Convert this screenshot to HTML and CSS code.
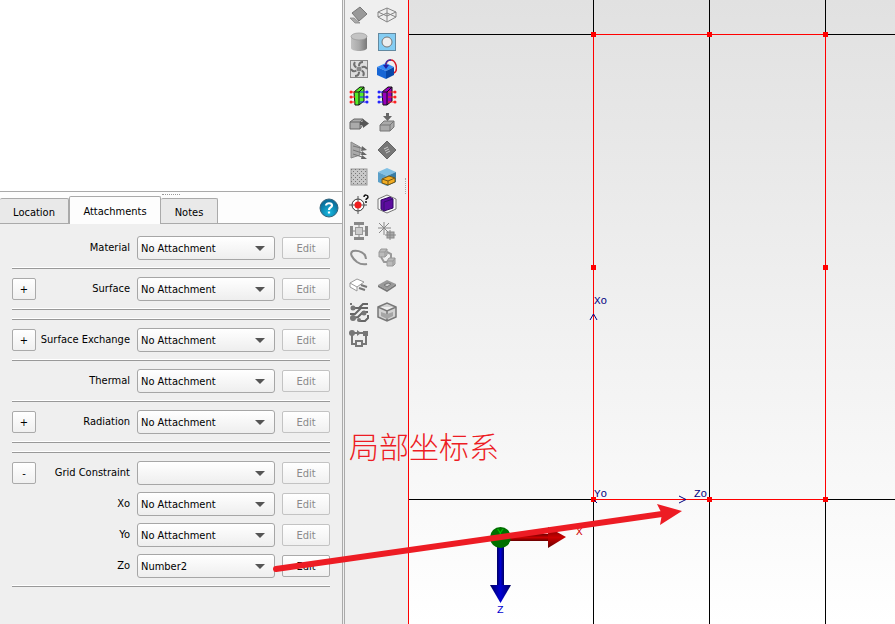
FILE: index.html
```
<!DOCTYPE html>
<html lang="zh">
<head>
<meta charset="utf-8">
<title>Attachments</title>
<link rel="stylesheet" href="styles.css">
</head>
<body>
<div class="app">
  <aside class="panel">
    <div class="tree"></div>
    <div class="grip"></div>
    <nav class="tabs">
      <button class="tab">Location</button>
      <button class="tab active">Attachments</button>
      <button class="tab">Notes</button>
      <button class="help" aria-label="Help"><svg width="20" height="20" viewBox="0 0 20 20"><defs><radialGradient id="hg" cx="50%" cy="75%" r="60%"><stop offset="0" stop-color="#16b9e0"/><stop offset="1" stop-color="#0b6f9c"/></radialGradient></defs><circle cx="10" cy="10" r="9" fill="url(#hg)" stroke="#35637a" stroke-width="1"/><path d="M7 7.500C7 4.500 13 4.500 13 7.500C13 9.500 10 9.500 10 12M10 13.500V15.500" fill="none" stroke="#fff" stroke-width="2.200"/></svg></button>
    </nav>
    <form class="form">
      <div class="row"><label for="material">Material</label><select id="material"><option>No Attachment</option></select><button type="button" class="edit" disabled>Edit</button></div>
      <hr>
      <div class="row"><button type="button" class="expand">+</button><label for="surface">Surface</label><select id="surface"><option>No Attachment</option></select><button type="button" class="edit" disabled>Edit</button></div>
      <hr class="end"><hr>
      <div class="row"><button type="button" class="expand">+</button><label for="exchange">Surface Exchange</label><select id="exchange"><option>No Attachment</option></select><button type="button" class="edit" disabled>Edit</button></div>
      <hr>
      <div class="row"><label for="thermal">Thermal</label><select id="thermal"><option>No Attachment</option></select><button type="button" class="edit" disabled>Edit</button></div>
      <hr>
      <div class="row"><button type="button" class="expand">+</button><label for="radiation">Radiation</label><select id="radiation"><option>No Attachment</option></select><button type="button" class="edit" disabled>Edit</button></div>
      <hr class="end"><hr>
      <div class="group">
        <div class="row"><button type="button" class="expand">-</button><label for="grid">Grid Constraint</label><select id="grid"><option></option></select><button type="button" class="edit" disabled>Edit</button></div>
        <div class="row"><label for="xo">Xo</label><select id="xo"><option>No Attachment</option></select><button type="button" class="edit" disabled>Edit</button></div>
        <div class="row"><label for="yo">Yo</label><select id="yo"><option>No Attachment</option></select><button type="button" class="edit" disabled>Edit</button></div>
        <div class="row"><label for="zo">Zo</label><select id="zo"><option>Number2</option></select><button type="button" class="edit">Edit</button></div>
      </div>
      <hr>
    </form>
  </aside>

  <div class="toolbar">
    <button aria-label="Plate"><svg viewBox="0 0 20 20"><path d="M1 13H5L11 18H6Z" fill="#aaa" stroke="#888" stroke-width=".8"/><path d="M3 8L11 2L18 9L10 16Z" fill="#999" stroke="#777"/></svg></button>
    <button aria-label="Wire prism"><svg viewBox="0 0 20 20"><path d="M1 7L10 3L19 7V12L10 17L1 12ZM1 7L10 11L19 7M10 3V17M1 12L10 8L19 12" fill="none" stroke="#858585"/></svg></button>
    <button aria-label="Cylinder"><svg viewBox="0 0 20 20"><defs><linearGradient id="cy"><stop stop-color="#c2c2c2"/><stop offset=".5" stop-color="#aaa"/><stop offset="1" stop-color="#777"/></linearGradient></defs><path d="M2 4V16C2 20 18 20 18 16V4Z" fill="url(#cy)"/><ellipse cx="10" cy="4.500" rx="8" ry="3.500" fill="#c4c4c4" stroke="#999" stroke-width=".7"/></svg></button>
    <button aria-label="Hole"><svg viewBox="0 0 20 20"><rect x="1.500" y="1.500" width="17" height="17" fill="#84cdf3" stroke="#6389a0"/><circle cx="10" cy="10" r="5" fill="#eee" stroke="#777"/></svg></button>
    <button aria-label="Fan"><svg viewBox="0 0 20 20"><rect x="1.500" y="1.500" width="17" height="17" fill="#ddd" stroke="#888"/><g fill="none" stroke="#707070" stroke-width="2"><path id="bl" d="M10 7C10 5 11 3 14 3"/><use href="#bl" transform="rotate(60 10 10)"/><use href="#bl" transform="rotate(120 10 10)"/><use href="#bl" transform="rotate(180 10 10)"/><use href="#bl" transform="rotate(240 10 10)"/><use href="#bl" transform="rotate(300 10 10)"/></g><circle cx="10" cy="10" r="2.500" fill="#888"/></svg></button>
    <button aria-label="Rotate block"><svg viewBox="0 0 20 20"><path d="M0 8L9 4L17 8L9 12Z" fill="#348af5"/><path d="M0 8L9 12V20L0 16Z" fill="#1766d5"/><path d="M9 12L17 8V16L9 20Z" fill="#0747a8"/><path d="M9 8C8 -1 17 -1 19 6C20 10 19 13 17 14" fill="none" stroke="#d81926" stroke-width="1.500"/><path d="M9 8C8 3 10 1 14 1" fill="none" stroke="#3933ad" stroke-width="1.500"/><path d="M6 6H12L9 10Z" fill="#2020a5"/></svg></button>
    <button aria-label="Green enclosure"><svg viewBox="0 0 20 20"><path d="M5 6L11 1H15V15L10 19H6Z" fill="#55ed28" stroke="#111"/><path d="M5 6H10L15 1M10 6V19" fill="none" stroke="#111"/><path d="M1 6H6M1 11H6M1 16H6" stroke="#f22"/><path d="M11 6H19M11 11H19M11 16H19" stroke="#22f"/><g fill="#f22"><circle cx="2" cy="6" r="1.500"/><circle cx="2" cy="11" r="1.500"/><circle cx="2" cy="16" r="1.500"/></g><g fill="#22f"><circle cx="18" cy="6" r="1.500"/><circle cx="18" cy="11" r="1.500"/><circle cx="18" cy="16" r="1.500"/></g></svg></button>
    <button aria-label="Purple enclosure"><svg viewBox="0 0 20 20"><path d="M5 6L11 1H15V15L10 19H6Z" fill="#9800bd" stroke="#111"/><path d="M5 6H10L15 1M10 6V19" fill="none" stroke="#111"/><path d="M1 6H6M1 11H6M1 16H6" stroke="#22f"/><path d="M11 6H19M11 11H19M11 16H19" stroke="#f22"/><g fill="#22f"><circle cx="2" cy="6" r="1.500"/><circle cx="2" cy="11" r="1.500"/><circle cx="2" cy="16" r="1.500"/></g><g fill="#f22"><circle cx="18" cy="6" r="1.500"/><circle cx="18" cy="11" r="1.500"/><circle cx="18" cy="16" r="1.500"/></g></svg></button>
    <button aria-label="Flow out"><svg viewBox="0 0 20 20"><path d="M1 9L5 6H14V12L11 16H1Z" fill="#aaa" stroke="#666"/><path d="M1 9H11V16M11 9L14 6" fill="none" stroke="#666"/><path d="M11 9H14V6L20 10.500L14 15V12H11Z" fill="#555"/></svg></button>
    <button aria-label="Load in"><svg viewBox="0 0 20 20"><path d="M3 12L7 8H17V14L13 18H3Z" fill="#aaa" stroke="#777"/><path d="M3 12H13V18M13 12L17 8" fill="none" stroke="#777"/><path d="M9 0H12V3H15L10.500 8L6 3H9Z" fill="#666"/></svg></button>
    <button aria-label="Vent"><svg viewBox="0 0 20 20"><path d="M2 2L11 7V15L2 18Z" fill="#aaa" stroke="#888"/><path d="M4 6L16 9M4 10L16 14M4 14L16 18" stroke="#777"/><path d="M13 6L18 10L12 11ZM13 11L18 15L12 15ZM13 15L18 19L12 19Z" fill="#666"/></svg></button>
    <button aria-label="Source plate"><svg viewBox="0 0 20 20"><path d="M10 1L19 10L10 19L1 10Z" fill="#777" stroke="#666"/><path d="M7 9L11 7M8 11L12 9M9 13L13 11" stroke="#ccc"/></svg></button>
    <button aria-label="Perforated plate"><svg viewBox="0 0 20 20"><defs><pattern id="pp" width="4" height="4" patternUnits="userSpaceOnUse"><path d="M0 0H1V1H0ZM2 2H3V3H2Z" fill="#777"/></pattern></defs><rect x="2" y="2" width="16" height="16" fill="#c8c8c8" stroke="#999"/><rect x="2" y="2" width="16" height="16" fill="url(#pp)"/></svg></button>
    <button aria-label="Cutaway"><svg viewBox="0 0 20 20"><path d="M1 5L10 1L19 5L10 9Z" fill="#81c0e4"/><path d="M1 5L10 9V19L1 15Z" fill="#5a9fc8"/><path d="M10 9L19 5V15L10 19Z" fill="#377ca5"/><path d="M5 12L12 9L18 11V15L11 18L5 16Z" fill="#f2ad23" stroke="#765919"/><path d="M5 12L11 14L18 11M11 14V18" fill="none" stroke="#765919"/></svg></button>
    <button aria-label="Target query"><svg viewBox="0 0 20 20"><circle cx="9" cy="11" r="6" fill="#fff" stroke="#333"/><path d="M9 2V20M0 11H18" stroke="#555"/><circle cx="9" cy="11" r="3.500" fill="#f02020"/><path d="M15 3C15 0 19 1 19 3C19 5 17 4 17 6M17 7V9" fill="none" stroke="#111" stroke-width="1.500"/></svg></button>
    <button aria-label="Purple volume"><svg viewBox="0 0 20 20"><path d="M1 5L10 1L19 5V15L10 19L1 15Z" fill="#f8f8f8" stroke="#777"/><path d="M4 6L13 3L16 5V14L7 17L4 15Z" fill="#5d0c9f" stroke="#310767"/><path d="M7 8L16 5M7 8V17" stroke="#35106d"/></svg></button>
    <button aria-label="Distribute"><svg viewBox="0 0 20 20"><g fill="#ccc" stroke="#999"><rect x="6.500" y="6.500" width="7" height="7"/></g><g fill="#888"><rect x="5" y="1" width="10" height="3"/><rect x="5" y="16" width="10" height="3"/><rect x="1" y="5" width="3" height="10"/><rect x="16" y="5" width="3" height="10"/></g><path d="M10 4V6M10 14V16M4 10H6M14 10H16" stroke="#888"/></svg></button>
    <button aria-label="Explode"><svg viewBox="0 0 20 20"><path d="M7 1V14M1 7H14M2 2L12 12M2 12L12 2" stroke="#888"/><rect x="10" y="11" width="7" height="6" fill="#aaa" stroke="#888"/><path d="M13 9V19M8 14H19" stroke="#888"/></svg></button>
    <button aria-label="Pipe"><svg viewBox="0 0 20 20"><path d="M17 11C17 5 10 2 4 3C0 5 3 10 8 14C11 16 14 17 18 16" fill="none" stroke="#8d8d8d" stroke-width="2"/></svg></button>
    <button aria-label="Linked blocks"><svg viewBox="0 0 20 20"><g fill="#bbb" stroke="#999"><path d="M2 4L4 1H10V7L8 9H2ZM2 4H8V9M8 4L10 1"/><path d="M10 13L12 10H18V16L16 18H10ZM10 13H16V18M16 13L18 10"/></g><path d="M4 9L7 14H10M10 4L14 6V10" fill="none" stroke="#999" stroke-width="2"/></svg></button>
    <button aria-label="Probe"><svg viewBox="0 0 20 20"><path d="M1 8L8 4L15 7L8 12ZM1 8V12L8 16V12" fill="#fff" stroke="#999"/><path d="M12 10L18 12M10 13L16 15" stroke="#777" stroke-width="2"/></svg></button>
    <button aria-label="Board"><svg viewBox="0 0 20 20"><path d="M1 10L10 5L19 9L10 15Z" fill="#999"/><path d="M1 10L10 15V17L1 12ZM10 15L19 9V11L10 17Z" fill="#777"/><path d="M7 10L11 8L14 9L10 12Z" fill="#ccc" stroke="#777"/></svg></button>
    <button aria-label="Traces"><svg viewBox="0 0 20 20"><path d="M4 6H10L14 2H19M1 12H6L12 6H19M4 16L9 15L14 10H19M10 19H16L19 16V13" fill="none" stroke="#666" stroke-width="2"/><g fill="#777"><circle cx="4" cy="6" r="2.500"/><circle cx="4" cy="16" r="3"/><circle cx="15" cy="11" r="2.500"/><circle cx="10" cy="18" r="2"/><path d="M1 1H3V3H1Z"/></g></svg></button>
    <button aria-label="Box"><svg viewBox="0 0 20 20"><path d="M1 5L10 1L19 5V15L10 19L1 15ZM1 5L10 9L19 5M10 9V19" fill="#d2d2d2" stroke="#777" stroke-width="1.500"/><path d="M4 10L10 12L16 10V14L10 17L4 14Z" fill="#a5a5a5"/></svg></button>
    <button aria-label="Network"><svg viewBox="0 0 20 20"><path d="M3 4V15H8M17 4V15H12M3 4H16" fill="none" stroke="#777" stroke-width="2"/><circle cx="3" cy="4" r="3" fill="#777"/><rect x="14" y="2" width="5" height="5" fill="#777"/><rect x="7" y="12" width="6" height="5" fill="#eee" stroke="#777" stroke-width="2"/><path d="M8 1L12 4L8 7Z" fill="#777"/></svg></button>
    <i class="handle"></i>
  </div>

  <main class="view">
    <svg class="scene" width="486" height="624" viewBox="409 0 486 624">
      <defs>
        <linearGradient id="cone" x2="0" y2="1"><stop stop-color="#6c0000"/><stop offset=".5" stop-color="#ca0000"/><stop offset="1" stop-color="#650000"/></linearGradient>
        <linearGradient id="down"><stop stop-color="#000060"/><stop offset=".5" stop-color="#0000d2"/><stop offset="1" stop-color="#000060"/></linearGradient>
      </defs>
      <g shape-rendering="crispEdges" fill="none">
        <path d="M409 34.500H895M409 499.500H895M593.500 0V624M709.500 0V624M825.500 0V624" stroke="#000"/>
        <path d="M593.500 499.500V34.500H825.500V499.500Z" stroke="#f00"/>
        <path d="M709.500 35V497" stroke="#000"/>
        <path d="M591 32h5v5h-5zM707 32h5v5h-5zM823 32h5v5h-5zM591 265h5v5h-5zM823 265h5v5h-5zM591 497h5v5h-5zM707 497h5v5h-5zM823 497h5v5h-5z" fill="#f00"/>
      </g>
      <path d="M590 320L593.500 314L597 320M679 496L686 499.500L679 503M594 500L597 503" fill="none" stroke="#000080"/>
      <g class="axis"><text x="594" y="304">Xo</text><text x="594" y="497">Yo</text><text x="694" y="497">Zo</text></g>
      <rect x="508" y="534" width="42" height="7" fill="url(#cone)"/>
      <path d="M548 527L566 537L548 548Z" fill="url(#cone)"/>
      <rect x="497" y="546" width="7" height="40" fill="url(#down)"/>
      <path d="M490 585H511L500.500 603Z" fill="url(#down)"/>
      <circle cx="500.500" cy="537.500" r="10.500" fill="#007000"/>
      <text class="glyph green" x="497" y="536">Y</text>
      <text class="glyph red" x="576" y="535">X</text>
      <text class="glyph blue" x="497" y="613">Z</text>
    </svg>
  </main>
  <svg class="pointer" width="415" height="80" viewBox="270 500 415 80" aria-hidden="true"><path d="M276 569L662 514" stroke="#ed1c24" stroke-width="6" stroke-linecap="round"/><path d="M657 504L682 511L660 525L662 514Z" fill="#ed1c24"/></svg>
  <div class="note">局部坐标系</div>
</div>
</body>
</html>
```
FILE: styles.css
```
* { box-sizing: border-box; }
body { margin: 0; font: 11px/16px "DejaVu Sans Condensed", "DejaVu Sans", sans-serif; color: #000; }
button, select { font: inherit; color: inherit; }
.app { position: relative; display: flex; min-height: 100vh; background: #efefef; overflow: hidden; }
.panel { flex: 0 0 343px; display: flex; flex-direction: column; border-right: 1px solid #aaa; background: #fdfdfd; }
.tree { height: 192px; background: #fff; border-bottom: 1px solid #aaa; }
.grip { width: 18px; height: 3px; margin: 0 auto 2px; border-bottom: 1px dotted #999; }
.tabs { display: flex; align-items: flex-end; height: 27px; border-bottom: 1px solid #aaa; }
.tab { width: 57px; height: 25px; padding: 4px 0 0; border: 1px solid #aaa; border-bottom: 0; border-left: 0; border-radius: 2px 2px 0 0; background: #e9e9e9; }
.tab:first-child { width: 69px; }
.tab.active { width: 92px; height: 28px; margin-bottom: -1px; padding-top: 2px; border-left: 1px solid #aaa; background: #fdfdfd; }
.help { width: 20px; height: 20px; margin: 0 3px 5px auto; padding: 0; border: 0; background: none; }
.help svg { display: block; }
.form { flex: 1; display: flex; flex-direction: column; gap: 8px; padding: 12px; background: #efefef; }
.row { display: grid; grid-template-columns: 24px minmax(0, 1fr) 138px 7px 48px; align-items: center; height: 24px; }
.row > * { grid-row: 1; }
.row label { grid-column: 2; justify-self: end; padding-right: 7px; white-space: nowrap; }
.row .expand { grid-column: 1; }
.row select { grid-column: 3; height: 24px; padding: 2px 3px 0; border: 1px solid #a6a6a6; border-radius: 3px; appearance: none; background: linear-gradient(#fff, #eee); }
.row::after { content: ""; grid-column: 3; grid-row: 1; justify-self: end; margin-right: 10px; z-index: 1; border: 5px solid transparent; border-top-color: #555; border-bottom: 0; pointer-events: none; }
.row .edit { grid-column: 5; }
.edit, .expand { height: 22px; padding: 2px 0 0; border: 1px solid #aaa; border-radius: 2px; background: linear-gradient(#fff, #f0f0f0); }
.edit:disabled { color: #8a8a8a; border-color: #c3c3c3; }
hr { width: 100%; height: 1px; margin: 0; border: 0; background: #999; box-shadow: 0 -1px #fff; }
hr.end { margin-bottom: 1px; }
.group { display: flex; flex-direction: column; gap: 7px; }
.toolbar { position: relative; flex: 0 0 64px; display: grid; grid-template-columns: 20px 20px; grid-auto-rows: 20px; align-content: start; column-gap: 8px; row-gap: 7px; padding: 5px 0 0 4px; border-left: 1px solid #aaa; margin-left: 1px; }
.toolbar button { width: 20px; height: 20px; padding: 0; border: 0; background: none; }
.toolbar svg { display: block; width: 20px; height: 20px; }
.handle { position: absolute; right: 2px; top: 178px; height: 16px; border-left: 1px dotted #aaa; }
.view { flex: 1; min-width: 0; border-left: 1px solid #f00; background: linear-gradient(#e1e1e1, #fff); }
.scene { display: block; }
.axis, .glyph { font: 11px "Liberation Mono", monospace; }
.axis { fill: #000080; }
.green { fill: #00d000; }
.red { fill: #d00000; }
.blue { fill: #0000d0; }
.pointer { position: absolute; left: 270px; top: 500px; pointer-events: none; }
.note { position: absolute; left: 349px; top: 425px; font: 300 30px/40px "Noto Sans CJK SC", sans-serif; color: #ed1c24; white-space: nowrap; }
```
